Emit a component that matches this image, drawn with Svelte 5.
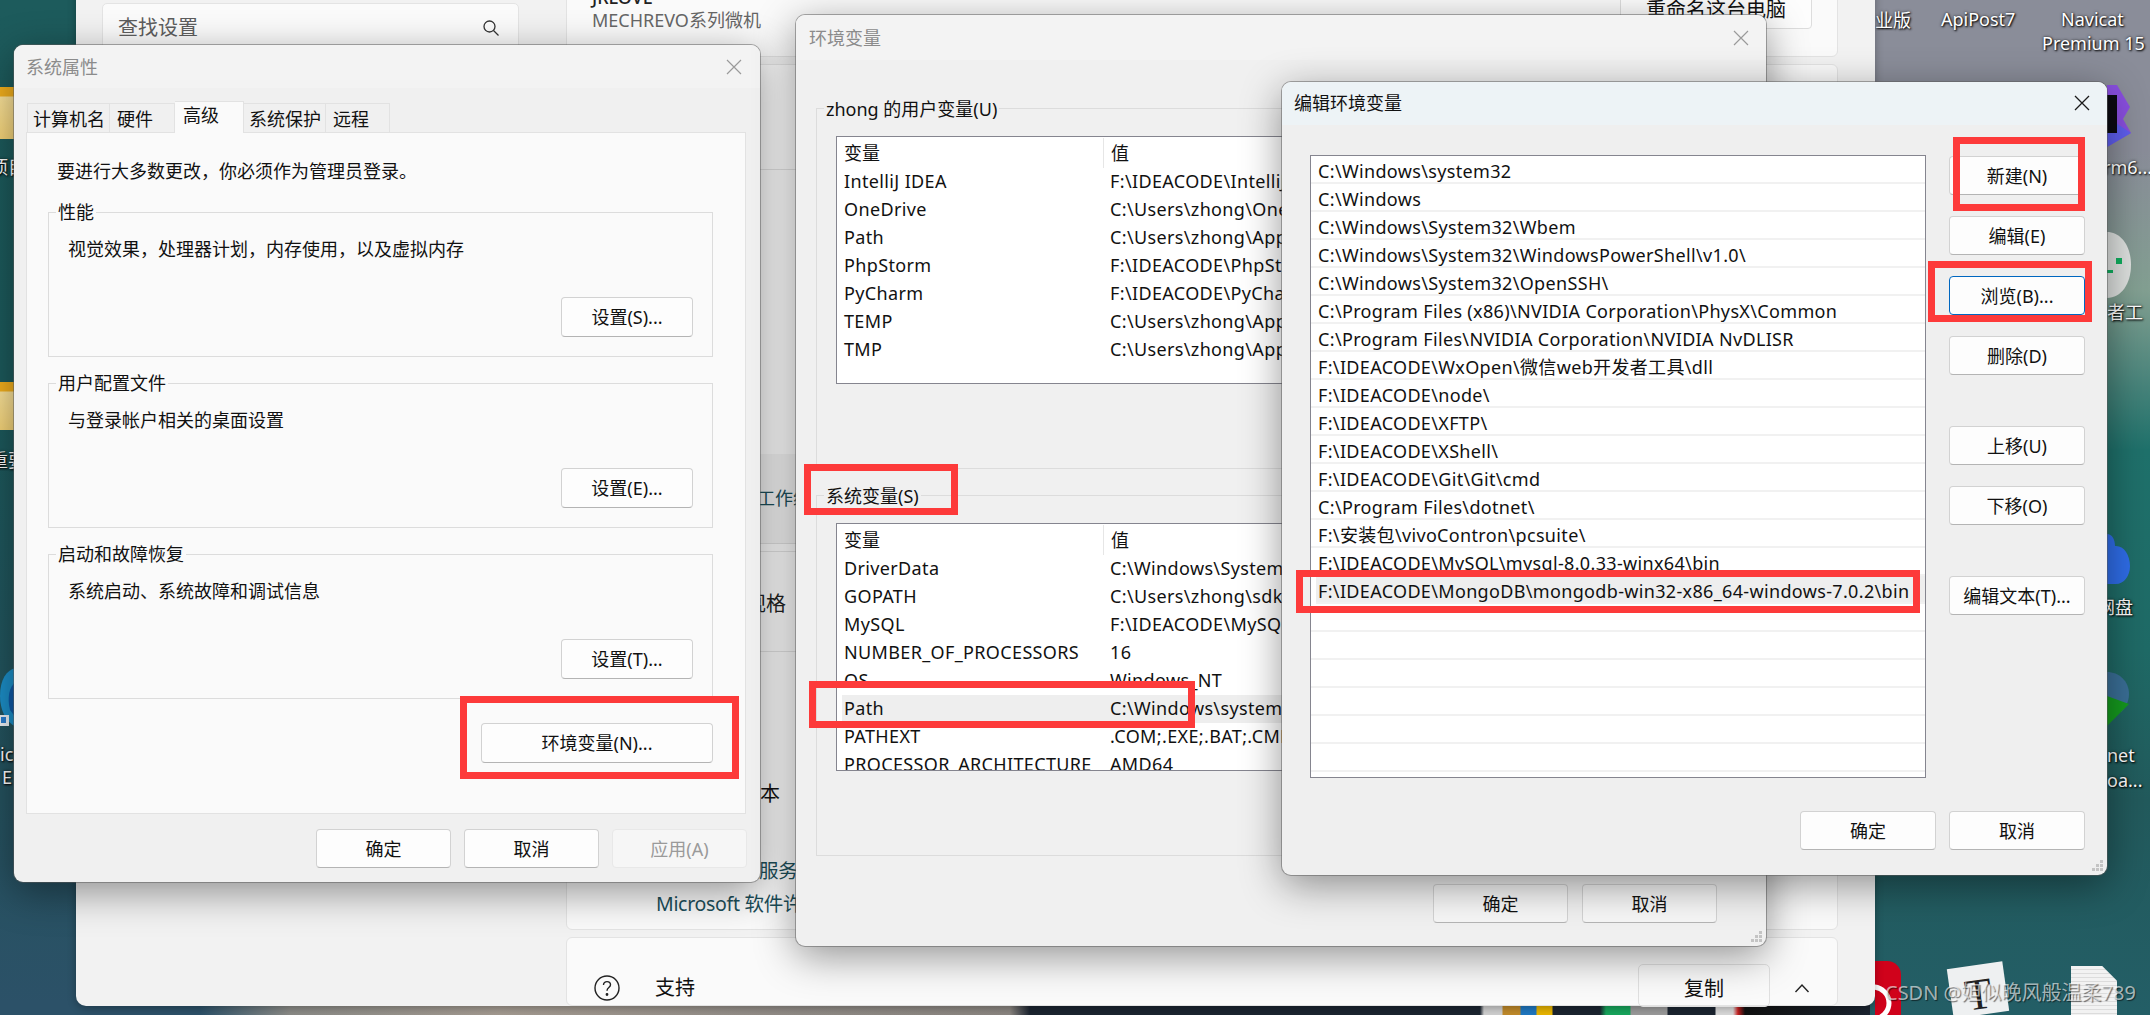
<script>
  const sysGroups = [
    { title: '性能', desc: '视觉效果，处理器计划，内存使用，以及虚拟内存', btn: '设置(S)...' },
    { title: '用户配置文件', desc: '与登录帐户相关的桌面设置', btn: '设置(E)...' },
    { title: '启动和故障恢复', desc: '系统启动、系统故障和调试信息', btn: '设置(T)...' }
  ];
  const tabs = [
    { t: '计算机名', w: 83, p: 5 },
    { t: '硬件', w: 65, p: 7 },
    { t: '高级', w: 69, p: 8, on: true },
    { t: '系统保护', w: 82, p: 5 },
    { t: '远程', w: 64, p: 7 }
  ];
  const userVars = [
    ['IntelliJ IDEA', 'F:\\IDEACODE\\IntelliJ IDEA\\bin'],
    ['OneDrive', 'C:\\Users\\zhong\\OneDrive'],
    ['Path', 'C:\\Users\\zhong\\AppData\\Local'],
    ['PhpStorm', 'F:\\IDEACODE\\PhpStorm\\bin'],
    ['PyCharm', 'F:\\IDEACODE\\PyCharm\\bin'],
    ['TEMP', 'C:\\Users\\zhong\\AppData\\Local\\Temp'],
    ['TMP', 'C:\\Users\\zhong\\AppData\\Local\\Temp']
  ];
  const sysVars = [
    ['DriverData', 'C:\\Windows\\System32\\Drivers'],
    ['GOPATH', 'C:\\Users\\zhong\\sdk\\go'],
    ['MySQL', 'F:\\IDEACODE\\MySQL\\mysql'],
    ['NUMBER_OF_PROCESSORS', '16'],
    ['OS', 'Windows_NT'],
    ['Path', 'C:\\Windows\\system32;C:\\Windows', true],
    ['PATHEXT', '.COM;.EXE;.BAT;.CMD;.VBS'],
    ['PROCESSOR_ARCHITECTURE', 'AMD64']
  ];
  const paths = [
    'C:\\Windows\\system32',
    'C:\\Windows',
    'C:\\Windows\\System32\\Wbem',
    'C:\\Windows\\System32\\WindowsPowerShell\\v1.0\\',
    'C:\\Windows\\System32\\OpenSSH\\',
    'C:\\Program Files (x86)\\NVIDIA Corporation\\PhysX\\Common',
    'C:\\Program Files\\NVIDIA Corporation\\NVIDIA NvDLISR',
    'F:\\IDEACODE\\WxOpen\\微信web开发者工具\\dll',
    'F:\\IDEACODE\\node\\',
    'F:\\IDEACODE\\XFTP\\',
    'F:\\IDEACODE\\XShell\\',
    'F:\\IDEACODE\\Git\\Git\\cmd',
    'C:\\Program Files\\dotnet\\',
    'F:\\安装包\\vivoContron\\pcsuite\\',
    'F:\\IDEACODE\\MySQL\\mysql-8.0.33-winx64\\bin',
    'F:\\IDEACODE\\MongoDB\\mongodb-win32-x86_64-windows-7.0.2\\bin',
    '', '', '', '', '', ''
  ];
  const sideBtns = [
    { t: '新建(N)', c: 'g20' },
    { t: '编辑(E)', c: 'g20' },
    { t: '浏览(B)...', c: 'g20 focus' },
    { t: '删除(D)', c: 'g51' },
    { t: '上移(U)', c: 'g20' },
    { t: '下移(O)', c: 'g51' },
    { t: '编辑文本(T)...', c: '' }
  ];
  const labels = [
    { t: '项目', x: -10, y: 155 },
    { t: '重要', x: -10, y: 448 },
    { t: 'ic', x: 0, y: 742 },
    { t: 'E', x: 2, y: 765 },
    { t: '业版', x: 1875, y: 8 },
    { t: 'ApiPost7', x: 1941, y: 7 },
    { t: 'Navicat', x: 2061, y: 7 },
    { t: 'Premium 15', x: 2042, y: 31 },
    { t: 'rm6...', x: 2103, y: 155 },
    { t: '者工', x: 2107, y: 300 },
    { t: '网盘', x: 2097, y: 595 },
    { t: 'net', x: 2107, y: 743 },
    { t: 'oa...', x: 2107, y: 768 }
  ];
</script>

{#snippet varList(vars)}
  <div class="vlist">
    <div class="vhead"><span class="c1">变量</span><span class="c2">值</span></div>
    {#each vars as v}
      <div class="vrow" class:sel={v[2]}><span class="c1">{v[0]}</span><span class="c2">{v[1]}</span></div>
    {/each}
  </div>
{/snippet}

{#snippet grip()}
  <svg class="grip" width="12" height="12" viewBox="0 0 12 12"><g fill="#c4c4c4"><rect x="8" y="0" width="3" height="3"/><rect x="4" y="4" width="3" height="3"/><rect x="8" y="4" width="3" height="3"/><rect x="0" y="8" width="3" height="3"/><rect x="4" y="8" width="3" height="3"/><rect x="8" y="8" width="3" height="3"/></g></svg>
{/snippet}

<div class="desk">
  <div class="wall-l"></div>
  <div class="wall-r"></div>
  <div class="wall-b"></div>

  <!-- desktop icons peeking out -->
  <div class="ico folder f1"></div>
  <div class="ico folder f2"></div>
  <svg class="ico edge" width="16" height="60" viewBox="0 0 16 60"><path d="M16 0C6 2 0 12 0 28c0 14 6 26 16 31z" fill="#1c8fc9"/><path d="M16 14C9 18 7 30 10 42l6 8z" fill="#0e5aa8"/><rect x="0" y="47" width="9" height="11" fill="#eef3f7"/><rect x="1" y="49" width="5" height="6" fill="#2b7fd0"/></svg>
  <svg class="ico stormico" width="26" height="62" viewBox="0 0 26 62"><path d="M0 0h10l13 22-7 12 8 14L0 62z" fill="#8a4fe0"/><path d="M0 32l24 16L0 62z" fill="#5f5ff0"/><rect x="0" y="10" width="10" height="38" fill="#0c0a12"/></svg>
  <svg class="ico disc" width="26" height="66" viewBox="0 0 26 66"><path d="M0 0c14 0 24 14 24 33S14 66 0 66z" fill="#dfe2e0"/><rect x="9" y="26" width="6" height="6" fill="#10b060"/><rect x="0" y="38" width="6" height="3" fill="#10b060"/></svg>
  <svg class="ico cloud" width="26" height="50" viewBox="0 0 26 50"><path d="M0 0c5 0 8 5 8 12 8-1 15 8 15 20 0 10-6 18-14 18H0z" fill="#2f6de8"/></svg>
  <svg class="ico globe" width="26" height="56" viewBox="0 0 26 56"><path d="M0 0c12 0 22 9 22 22 0 8-4 14-8 18H0z" fill="#3a6f97"/><path d="M0 24l22 8L0 54z" fill="#159a1e"/></svg>
  <div class="ico redapp"><svg width="26" height="54" viewBox="0 0 26 54"><circle cx="-2" cy="42" r="16" fill="none" stroke="#fff" stroke-width="5"/></svg></div>
  <div class="ico tdoc"><span>T</span></div>
  <div class="ico wdoc"></div>
  {#each labels as l}
    <span class="dlabel" style="left:{l.x}px;top:{l.y}px">{l.t}</span>
  {/each}

  <!-- Settings window behind -->
  <section class="settings">
    <div class="set-left">
      <div class="search">
        <span>查找设置</span>
        <svg width="18" height="18" viewBox="0 0 18 18" fill="none" stroke="#333" stroke-width="1.3"><circle cx="7.5" cy="7.5" r="5.5"/><path d="M11.5 11.5l5 5"/></svg>
      </div>
    </div>
    <div class="set-right">
      <div class="card c-a">
        <div class="c-a-text"><div class="jr">JRLOVE</div><div class="mech">MECHREVO系列微机</div></div>
        <div class="rename">重命名这台电脑</div>
      </div>
      <div class="card c-b">
        <div class="cline l1"></div>
        <div class="band"><span class="work">工作组</span></div>
        <div class="spec"><span>规格</span></div>
        <div class="cline l2"></div>
        <div class="ver">本</div>
        <div class="links"><span class="svc">服务协议</span><span class="lic">Microsoft 软件许可条款</span></div>
      </div>
      <div class="card c-c">
        <svg class="help" width="26" height="26" viewBox="0 0 26 26" fill="none" stroke="#222" stroke-width="1.4"><circle cx="13" cy="13" r="12"/><path d="M9.5 10c0-2 1.6-3.4 3.5-3.4s3.5 1.4 3.5 3.2c0 2.8-3.5 2.8-3.5 6"/><circle cx="13" cy="19.5" r=".7" fill="#222"/></svg>
        <span class="sup">支持</span>
        <span class="copy">复制</span>
        <svg class="chev" width="16" height="10" viewBox="0 0 16 10" fill="none" stroke="#222" stroke-width="1.4"><path d="M1.5 9L8 2l6.5 7"/></svg>
      </div>
    </div>
  </section>

  <!-- 系统属性 -->
  <section class="win sys">
    <header class="title dim">
      <span>系统属性</span>
      <svg width="16" height="16" viewBox="0 0 16 16" stroke="#9a9a9a" stroke-width="1.2"><path d="M1 1l14 14M15 1L1 15"/></svg>
    </header>
    <div class="tabs">
      {#each tabs as t}
        <span class="tab" class:on={t.on} style="width:{t.w}px;padding-left:{t.p}px">{t.t}</span>
      {/each}
    </div>
    <div class="panel">
      <p class="note">要进行大多数更改，你必须作为管理员登录。</p>
      {#each sysGroups as g}
        <div class="group sg">
          <span class="legend">{g.title}</span>
          <p class="desc">{g.desc}</p>
          <button class="btn gb">{g.btn}</button>
        </div>
      {/each}
      <button class="btn envb">环境变量(N)...</button>
    </div>
    <div class="foot sf">
      <button class="btn fb">确定</button>
      <button class="btn fb">取消</button>
      <button class="btn fb off">应用(A)</button>
    </div>
  </section>

  <!-- 环境变量 -->
  <section class="win env">
    <header class="title dim env-t">
      <span>环境变量</span>
      <svg width="16" height="16" viewBox="0 0 16 16" stroke="#9a9a9a" stroke-width="1.2"><path d="M1 1l14 14M15 1L1 15"/></svg>
    </header>
    <div class="env-body">
      <div class="group eg">
        <span class="legend">zhong 的用户变量(U)</span>
        {@render varList(userVars)}
      </div>
      <div class="group eg">
        <span class="legend">系统变量(S)</span>
        {@render varList(sysVars)}
      </div>
    </div>
    <div class="foot ef">
      <button class="btn dimb">确定</button>
      <button class="btn dimb">取消</button>
    </div>
    {@render grip()}
  </section>

  <!-- 编辑环境变量 -->
  <section class="win edit">
    <header class="title act">
      <span>编辑环境变量</span>
      <svg width="16" height="16" viewBox="0 0 16 16" stroke="#1a1a1a" stroke-width="1.3"><path d="M1 1l14 14M15 1L1 15"/></svg>
    </header>
    <div class="edit-body">
      <div class="plist">
        {#each paths as p, i}
          <div class="prow" class:psel={i === 15}><span>{p}</span></div>
        {/each}
      </div>
      <div class="side">
        {#each sideBtns as b}
          <button class="btn sb {b.c}">{b.t}</button>
        {/each}
      </div>
    </div>
    <div class="foot ff">
      <button class="btn sb">确定</button>
      <button class="btn sb">取消</button>
    </div>
    {@render grip()}
  </section>

  <!-- red annotation boxes -->
  <div class="mark m1"></div>
  <div class="mark m2"></div>
  <div class="mark m3"></div>
  <div class="mark m4"></div>
  <div class="mark m5"></div>
  <div class="mark m6"></div>

  <div class="wm">CSDN @妲似晚风般温柔789</div>
</div>

<style>
  :global(body) { margin: 0; }
  .desk {
    position: relative; width: 2150px; height: 1015px; overflow: hidden;
    background: #1f5d5f;
    font: 18px/24px "Noto Sans", "Noto Sans CJK SC", sans-serif; color: #111;
  }
  p { margin: 0; }
  .wall-l { position: absolute; left: 0; top: 0; width: 120px; height: 1015px; background: linear-gradient(180deg, #1d5b5c 0, #1c5a5c 400px, #25525f 800px, #2c5168 1015px); }
  .wall-r { position: absolute; left: 1860px; top: 0; width: 290px; height: 1015px; background: linear-gradient(180deg, #8a8d99 0, #8a8d99 150px, #83a092 290px, #1f716b 450px, #1f6a66 650px, #225a5c 800px, #235e66 1015px); }
  .wall-b { position: absolute; left: 0; top: 1000px; width: 1870px; height: 15px; background: linear-gradient(90deg, #2c5168 0, #2c5168 200px, #8a8a86 290px, #a39a90 500px, #8f8a85 800px, #8a8580 1010px, #1b2430 1030px, #1b2430 1480px, #cfcfcf 1484px, #cfcfcf 1502px, #c08a2a 1503px, #c08a2a 1520px, #1f77c0 1521px, #1f77c0 1536px, #e8b400 1537px, #e8b400 1552px, #1b2430 1553px, #1b2430 1600px, #17a55c 1606px, #17a55c 1630px, #9a9a9a 1631px, #9a9a9a 1667px, #1b2430 1668px, #1b2430 1715px, #d8d8d8 1716px, #d8d8d8 1733px, #c82020 1738px, #111 1745px, #1b2430 1870px); }

  .ico { position: absolute; }
  .folder { left: 0; width: 14px; background: linear-gradient(180deg, #f3b01d 0, #f3b01d 9px, #fbe39a 10px, #f6d579 100%); }
  .f1 { top: 87px; height: 52px; }
  .f2 { top: 382px; height: 48px; }
  .edge { left: 0; top: 668px; }
  .stormico { left: 2107px; top: 85px; }
  .disc { left: 2107px; top: 232px; }
  .cloud { left: 2107px; top: 534px; }
  .globe { left: 2107px; top: 672px; }
  .redapp { left: 1875px; top: 961px; width: 26px; height: 54px; background: #d0021b; border-radius: 0 14px 0 0; overflow: hidden; }
  .tdoc { left: 1950px; top: 965px; width: 56px; height: 50px; background: #eef0f1; transform: rotate(-8deg); text-align: center; font: 44px/60px "Liberation Serif", serif; color: #222; }
  .wdoc { left: 2071px; top: 966px; width: 46px; height: 49px; background: repeating-linear-gradient(180deg, #f2f2f2 0, #f2f2f2 3px, #dcdcdc 3px, #dcdcdc 4px); clip-path: polygon(0 0, 68% 0, 100% 30%, 100% 100%, 0 100%); }
  .dlabel { position: absolute; white-space: nowrap; color: #fff; font-size: 18px; text-shadow: 1px 1px 2px #000, 0 0 3px rgba(0,0,0,.7); }

  /* settings */
  .settings { position: absolute; left: 76px; top: -20px; width: 1799px; height: 1026px; background: #f2f2f2; border-radius: 0 0 10px 10px; display: flex; box-shadow: 0 2px 8px rgba(0,0,0,.3); }
  .set-left { width: 490px; padding: 24px 0 0 26px; box-sizing: border-box; }
  .search { width: 417px; height: 50px; box-sizing: border-box; background: #fbfbfb; border: 1px solid #e4e4e4; border-radius: 5px; display: flex; align-items: center; justify-content: space-between; padding: 0 18px 0 15px; color: #5e5e5e; font-size: 20px; margin-top: -1px; }
  .set-right { width: 1272px; height: 1026px; display: flex; flex-direction: column; gap: 7px; }
  .card { background: #fafafa; border: 1px solid #e3e3e3; border-radius: 6px; position: relative; box-sizing: border-box; flex: none; }
  .c-a { height: 77px; display: flex; justify-content: space-between; align-items: flex-start; padding: 0 25px; }
  .jr { font-size: 18px; font-weight: 500; line-height: 24px; margin-top: 4px; color: #222; }
  .mech { color: #666; line-height: 22px; margin-top: 0; }
  .rename { width: 192px; height: 48px; text-align: center; border: 1px solid #ddd; border-radius: 4px; line-height: 56px; background: #fdfdfd; box-sizing: border-box; font-size: 20px; }
  .c-b { height: 866px; }
  .cline { position: absolute; left: 0; right: 0; height: 1px; background: #e0e0e0; }
  .l1 { top: 104px; }
  .band { position: absolute; left: 0; right: 0; top: 389px; height: 89px; background: #f0f0f0; border-bottom: 1px solid #ddd; }
  .work { position: absolute; left: 190px; top: 32px; color: #1c4f5a; }
  .spec { position: absolute; left: 0; right: 0; top: 486px; height: 100px; border-top: 1px solid #e0e0e0; }
  .spec span { position: absolute; left: 179px; top: 40px; font-size: 20px; color: #222; }
  .l2 { top: 586px; }
  .ver { position: absolute; left: 193px; top: 717px; font-size: 20px; }
  .links { position: absolute; left: 89px; top: 791px; display: flex; flex-direction: column; color: #1c4f5a; line-height: 30px; font-size: 19.5px; letter-spacing: -.3px; white-space: nowrap; }
  .svc { margin-left: 103px; }
  .lic { margin-top: 3px; }
  .c-c { height: 69px; }
  .help { position: absolute; left: 27px; top: 37px; }
  .sup { position: absolute; left: 88px; top: 38px; font-size: 20px; }
  .copy { position: absolute; left: 1071px; top: 26px; width: 132px; height: 43px; text-align: center; line-height: 48px; font-size: 20px; border: 1px solid #e0e0e0; border-radius: 5px; box-sizing: border-box; }
  .chev { position: absolute; left: 1227px; top: 45px; }

  /* dialogs */
  .win { position: absolute; display: flex; flex-direction: column; box-sizing: border-box; border-radius: 9px; background: #f0f0f0; box-shadow: 0 0 0 1px rgba(90,90,90,.5), 0 10px 40px rgba(0,0,0,.42); }
  .title { display: flex; align-items: center; justify-content: space-between; border-radius: 9px 9px 0 0; flex: none; }
  .dim { background: #f3f3f3; color: #8b8b8b; }
  .act { background: #edf3f6; color: #111; height: 41px; padding: 0 17px 2px 12px; }

  .sys { left: 14px; top: 45px; width: 746px; height: 837px; }
  .sys .title { height: 43px; padding: 0 18px 0 12px; }
  .tabs { display: flex; margin: 15px 0 0 13px; height: 29px; position: relative; z-index: 1; }
  .tab { box-sizing: border-box; height: 30px; border: 1px solid #e2e2e2; border-left: 0; line-height: 30px; background: #f0f0f0; }
  .tab:first-child { border-left: 1px solid #e2e2e2; }
  .tab.on { background: #fafafa; height: 32px; margin-top: -2px; border-bottom: 0; line-height: 26px; }
  .panel { margin-left: 12px; width: 720px; height: 682px; box-sizing: border-box; background: #fafafa; border: 1px solid #e2e2e2; padding: 26px 0 0 21px; display: flex; flex-direction: column; align-items: flex-start; }
  .note { margin-bottom: 29px; margin-left: 9px; }

  .group { border: 1px solid #dcdcdc; box-sizing: border-box; display: flex; flex-direction: column; align-items: flex-start; }
  .legend { margin: -13px 0 0 7px; padding: 0 2px; background: inherit; }
  .sg { width: 665px; height: 145px; margin-bottom: 26px; background: #fafafa; }
  .desc { margin: 13px 0 0 19px; }
  .btn { font: inherit; color: #111; background: #fdfdfd; border: 1px solid #d2d2d2; border-bottom-color: #b4b4b4; border-radius: 4px; padding: 0; box-sizing: border-box; white-space: nowrap; }
  .gb { width: 132px; height: 40px; margin: auto 19px 19px 0; align-self: flex-end; }
  .envb { width: 232px; height: 40px; margin: -2px 0 0 433px; }
  .foot { display: flex; flex: none; }
  .sf { justify-content: flex-end; gap: 13px; padding: 15px 13px 0 0; }
  .fb { width: 135px; height: 39px; }
  .off { color: #9a9a9a; background: #f6f6f6; border-color: #e8e8e8; }

  .env { left: 796px; top: 15px; width: 970px; height: 931px; }
  .env-t { height: 45px; padding: 0 17px 0 13px; }
  .env-body { padding: 48px 21px 0 20px; display: flex; flex-direction: column; gap: 26px; }
  .eg { height: 361px; background: #f0f0f0; }
  .eg .legend { margin-top: -12px; }
  .vlist { margin: 15px 0 0 19px; width: 900px; height: 248px; box-sizing: border-box; border: 1px solid #85858f; background: #fff; overflow: hidden; flex: none; letter-spacing: .36px; }
  .vhead { display: flex; height: 31px; line-height: 32px; letter-spacing: 0; }
  .vhead .c2 { border-left: 1px solid #e6e6e6; height: 30px; margin-top: 1px; line-height: 30px; }
  .vrow { display: flex; height: 28px; line-height: 26px; margin-left: 5px; }
  .c1 { flex: none; box-sizing: border-box; white-space: nowrap; }
  .vhead .c1 { padding-left: 7px; width: 266px; }
  .c2 { padding-left: 7px; white-space: nowrap; }
  .vrow .c1 { width: 261px; padding-left: 2px; }
  .sel { background: #eeeeee; }
  .ef { justify-content: flex-end; gap: 14px; padding: 28px 49px 0 0; }
  .dimb { width: 135px; height: 39px; background: #f6f6f6; }
  .grip { position: absolute; right: 3px; bottom: 3px; }

  .edit { left: 1282px; top: 82px; width: 825px; height: 793px; background: #efefef; }
  .edit-body { display: flex; gap: 23px; padding: 30px 0 0 28px; }
  .plist { width: 616px; height: 623px; box-sizing: border-box; border: 1px solid #85858f; background: #fff; overflow: hidden; flex: none; letter-spacing: .34px; }
  .prow { height: 28px; line-height: 30px; box-sizing: border-box; border-bottom: 2px solid #f1f1f1; padding-left: 7px; white-space: nowrap; }
  .psel { background: #eee; margin-left: 5px; padding-left: 2px; }
  .side { display: flex; flex-direction: column; align-items: flex-start; padding-top: 1px; }
  .sb { width: 136px; height: 39px; flex: none; }
  .g20 { margin-bottom: 21px; }
  .g51 { margin-bottom: 51px; }
  .focus { border-color: #0067c0; }
  .ff { justify-content: flex-end; gap: 13px; padding: 33px 22px 0 0; }

  .mark { position: absolute; box-sizing: border-box; border: 7px solid #fd3a3a; }
  .m1 { left: 460px; top: 696px; width: 279px; height: 83px; }
  .m2 { left: 804px; top: 464px; width: 154px; height: 51px; }
  .m3 { left: 809px; top: 681px; width: 386px; height: 47px; }
  .m4 { left: 1953px; top: 137px; width: 132px; height: 74px; }
  .m5 { left: 1928px; top: 261px; width: 164px; height: 61px; }
  .m6 { left: 1296px; top: 570px; width: 624px; height: 43px; }

  .wm { position: absolute; left: 1885px; top: 981px; color: rgba(255,255,255,.62); font-size: 20px; white-space: nowrap; text-shadow: 1px 1px 1px rgba(0,0,0,.55); }
</style>
